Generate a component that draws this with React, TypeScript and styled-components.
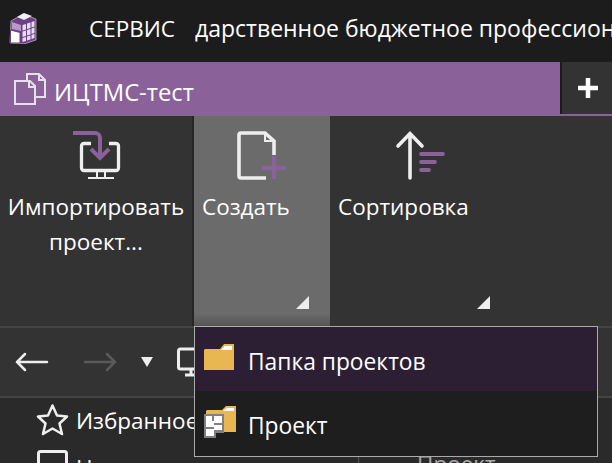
import React from "react";
import styled, { createGlobalStyle } from "styled-components";

const Global = createGlobalStyle`
  html, body { margin: 0; padding: 0; width: 612px; height: 463px; overflow: hidden; background: #2a2a2a; }
  * { box-sizing: border-box; }
`;

const Page = styled.div`
  position: relative;
  width: 612px;
  height: 463px;
  overflow: hidden;
  font-family: "Open Sans", "Noto Sans", sans-serif;
  font-size: 22.5px;
  color: #fff;
  display: flex;
  flex-direction: column;
`;

const TitleBar = styled.div`
  height: 62px;
  flex: none;
  background: #1c1c1c;
  display: flex;
  align-items: center;
  padding: 0 0 6px 9px;
  white-space: nowrap;
  overflow: hidden;
`;

const TitleMenu = styled.span`
  margin-left: 50px;
`;

const TitleText = styled.span`
  margin-left: 20px;
  font-size: 23px;
`;

const LogoBox = styled.div`
  display: flex;
  width: 30px;
  flex: none;
`;

const TabBar = styled.div`
  height: 54px;
  flex: none;
  background: #8a6199;
  display: flex;
  align-items: flex-start;
  justify-content: space-between;
`;

const Tab = styled.div`
  display: flex;
  align-items: center;
  height: 54px;
  padding-left: 14px;
  gap: 7px;
  font-size: 23.8px;
`;

const TabLabel = styled.span`
  margin-top: 5px;
`;

const AddTab = styled.div`
  width: 52px;
  height: 52px;
  background: #333;
  border-left: 2px solid #1c1c1c;
  padding-left: 2px;
  display: flex;
  align-items: center;
  justify-content: center;
`;

const Ribbon = styled.div`
  height: 212px;
  flex: none;
  background: #333;
  display: flex;
  border-bottom: 2px solid #444;
`;

const RibbonButton = styled.div<{ $w: number; $active?: boolean }>`
  position: relative;
  width: ${(p) => p.$w}px;
  flex: none;
  background: ${(p) => (p.$active ? "linear-gradient(#6b6b6b 94%, #555)" : "transparent")};
  display: flex;
  flex-direction: column;
  align-items: flex-start;
  padding: 14px 8px 0;
  line-height: 35px;
`;

const CenteredLabel = styled.div`
  align-self: center;
  margin: 0 -4px;
  text-align: center;
`;

const RibbonIcon = styled.div`
  height: 59px;
  align-self: center;
  display: flex;
  align-items: flex-start;
`;

const Sep = styled.div`
  width: 2px;
  flex: none;
  background: #262626;
`;

const Corner = styled.div`
  position: absolute;
  right: 21px;
  bottom: 17px;
  width: 0;
  height: 0;
  border-style: solid;
  border-width: 0 0 13px 13px;
  border-color: transparent transparent #eee transparent;
`;

const NavBar = styled.div`
  height: 70px;
  flex: none;
  background: #333;
  border-bottom: 2px solid #444;
  display: flex;
  align-items: center;
  padding-left: 15px;
`;

const NavIcon = styled.div<{ $ml?: number }>`
  margin-left: ${(p) => p.$ml ?? 0}px;
  display: flex;
  align-items: center;
`;

const TreeArea = styled.div`
  flex: 1;
  background: #2a2a2a;
  position: relative;
  display: flex;
  flex-direction: column;
  padding: 0 0 0 36px;
`;

const TreeList = styled.div`
  display: flex;
  flex-direction: column;
  margin-top: -1px;
`;

const TreeRow = styled.div`
  display: flex;
  align-items: center;
  gap: 7px;
  height: 47px;
  white-space: nowrap;
  flex: none;
`;

const ColumnLine = styled.div`
  position: absolute;
  left: 358px;
  top: 58px;
  bottom: 0;
  width: 1px;
  background: #555;
`;

const ColumnText = styled.div`
  position: absolute;
  left: 417px;
  top: 50px;
  color: #aaa;
`;

const Menu = styled.div`
  position: absolute;
  left: 194px;
  top: 326px;
  width: 404px;
  height: 131px;
  background: #1e1e1e;
  border: 1px solid #aaa;
  display: flex;
  flex-direction: column;
`;

const MenuItem = styled.div<{ $hover?: boolean }>`
  height: 64px;
  display: flex;
  align-items: center;
  padding-left: 9px;
  font-size: 22.8px;
  background: ${(p) => (p.$hover ? "#2d1f33" : "transparent")};
`;

const MenuIcon = styled.div<{ $up: number }>`
  width: 44px;
  flex: none;
  display: flex;
  margin-top: ${(p) => -p.$up}px;
`;

const MenuLabel = styled.span`
  margin-top: 4px;
`;

const Purple = "#8a6199";
const White = "#eee";

const Logo = () => (
  <svg width="30" height="32" viewBox="0 0 30 32">
    <path d="M2 9L14 2l13 5v21l-12 4-14-1z" fill="#6d3f87" stroke="#e3d8ea" strokeWidth=".6" />
    <path d="M8 5l7-4 8 3-8 4z" fill="#f3edf6" />
    <path d="M3 10l9 3v6l-9-2z" fill="#b49ac4" />
    <path d="M13.500 13l3.500-1v5.500l-3.500 1zM18 11.500l3.500-1V16L18 17zM22.500 10l3-1v5.500l-3 1zM13.500 19.500l3.500-1V24l-3.500 1zM18 18l3.500-1v5.500l-3.500 1zM22.500 16.500l3-1V21l-3 1zM13.500 26l3.500-1v4l-3.500 1zM18 24.500l3.500-1v4l-3.500 1zM22.500 23l3-1v4l-3 1z" fill="#e6dcec" />
    <path d="M1.500 18l9.500 2.500V31H1.500z" fill="#fff" stroke="#6d3f87" />
  </svg>
);

const App = () => (
  <>
    <Global />
    <Page>
      <TitleBar>
        <LogoBox><Logo /></LogoBox>
        <TitleMenu>СЕРВИС</TitleMenu>
        <TitleText>дарственное бюджетное профессиональное</TitleText>
      </TitleBar>
      <TabBar>
        <Tab>
          <svg width="33" height="33" viewBox="0 0 33 33" fill="none" stroke="#e6e0ea" strokeWidth="2">
            <path d="M13 7V1h12l6 6v17H21" />
            <path d="M1 8h15l5 5v18H1z" />
            <path d="M15 8v6h6" />
            <path d="M25 1v6h6" />
          </svg>
          <TabLabel>ИЦТМС-тест</TabLabel>
        </Tab>
        <AddTab>
          <svg width="20" height="20" viewBox="0 0 20 20"><path d="M10 0v20M0 10h20" stroke="#fff" strokeWidth="4.500" /></svg>
        </AddTab>
      </TabBar>
      <Ribbon>
        <RibbonButton $w={192}>
          <RibbonIcon>
            <svg width="50" height="50" viewBox="0 0 50 50" fill="none">
              <path d="M20 13.500h-7a2.500 2.500 0 0 0-2.500 2.500v22a2.500 2.500 0 0 0 2.500 2.500h32a2.500 2.500 0 0 0 2.500-2.500V16a2.500 2.500 0 0 0-2.500-2.500h-7" stroke={White} strokeWidth="3.300" />
              <path d="M17 48h26M26 41v7M34 41v7" stroke={White} strokeWidth="2" />
              <path d="M2 3h22a5 5 0 0 1 5 5v19" stroke={Purple} strokeWidth="4" />
              <path d="M20 19l9 9 9-9" stroke={Purple} strokeWidth="4" />
            </svg>
          </RibbonIcon>
          <CenteredLabel>Импортировать<br />проект...</CenteredLabel>
        </RibbonButton>
        <Sep />
        <RibbonButton $w={136} $active>
          <RibbonIcon>
            <svg width="50" height="50" viewBox="0 0 50 50" fill="none">
              <path d="M29 48H4a2 2 0 0 1-2-2V5a2 2 0 0 1 2-2h24l9 8v14" stroke={White} strokeWidth="3.600" />
              <path d="M28 3v8h9" stroke={White} strokeWidth="2" />
              <path d="M37 26v23M25 38h24" stroke={Purple} strokeWidth="4.500" />
            </svg>
          </RibbonIcon>
          Создать
          <Corner />
        </RibbonButton>
        <RibbonButton $w={181}>
          <RibbonIcon>
            <svg width="51" height="50" viewBox="0 0 51 50" fill="none">
              <path d="M15 3.500V48M3 16L15 3.500 27 16" stroke={White} strokeWidth="3.600" strokeLinecap="round" />
              <path d="M26 24h22M26 32h14M26 40h8" stroke={Purple} strokeWidth="3.800" strokeLinecap="round" />
            </svg>
          </RibbonIcon>
          Сортировка
          <Corner />
        </RibbonButton>
      </Ribbon>
      <NavBar>
        <NavIcon>
          <svg width="34" height="22" viewBox="0 0 34 22" fill="none" stroke={White} strokeWidth="2.500" strokeLinecap="round"><path d="M2 11h30M10 3l-8 8 8 8" /></svg>
        </NavIcon>
        <NavIcon $ml={34}>
          <svg width="34" height="22" viewBox="0 0 34 22" fill="none" stroke="#5a5a5a" strokeWidth="2.500" strokeLinecap="round"><path d="M2 11h30M24 3l8 8-8 8" /></svg>
        </NavIcon>
        <NavIcon $ml={24}>
          <svg width="12" height="10" viewBox="0 0 12 10"><path d="M0 0h12L6 10z" fill={White} /></svg>
        </NavIcon>
        <NavIcon $ml={24}>
          <svg width="32" height="30" viewBox="0 0 32 30" fill="none" stroke={White} strokeWidth="3"><rect x="1.500" y="2" width="29" height="20" rx="2" /><path d="M8 28h18M14 22v5" /></svg>
        </NavIcon>
      </NavBar>
      <TreeArea>
        <TreeList>
          <TreeRow>
            <svg width="33" height="33" viewBox="0 0 33 33" fill="none" stroke={White} strokeWidth="2.500"><path d="M16.500 1.500l4.500 10 10 1-7.500 7 2.500 10.500-9.500-5.500-9.500 5.500 2.500-10.500-7.500-7 10-1z" strokeLinejoin="round" /></svg>
            Избранное
          </TreeRow>
          <TreeRow>
            <svg width="33" height="33" viewBox="0 0 33 33" fill="none" stroke={White} strokeWidth="3" overflow="visible"><rect x="2.500" y="0.500" width="28" height="24" rx="2" /></svg>
            Недавние
          </TreeRow>
        </TreeList>
        <ColumnLine />
        <ColumnText>Проект</ColumnText>
      </TreeArea>
      <Menu>
        <MenuItem $hover>
          <MenuIcon $up={4}>
            <svg width="30" height="26" viewBox="0 0 30 26"><path d="M0 6l1-1h15l4-5h10v26H0z" fill="#e9b751" /><path d="M17 6l4-4h7v4z" fill="#fff" /></svg>
          </MenuIcon>
          <MenuLabel>Папка проектов</MenuLabel>
        </MenuItem>
        <MenuItem>
          <MenuIcon $up={2}>
            <svg width="32" height="32" viewBox="0 0 32 32">
              <path d="M2 5l1-1h15l4-4h10v26H2z" fill="#e9b751" />
              <path d="M19 5l4-3h7v3z" fill="#fff" />
              <path d="M0 8h20v19h-8v5H0z" fill="#808080" />
              <path d="M2 10h6v5h2v-5h8v7h-8v2h8v5h-8v6H2v-7h8v-2H2z" fill="#fff" />
            </svg>
          </MenuIcon>
          <MenuLabel>Проект</MenuLabel>
        </MenuItem>
      </Menu>
    </Page>
  </>
);

export default App;
